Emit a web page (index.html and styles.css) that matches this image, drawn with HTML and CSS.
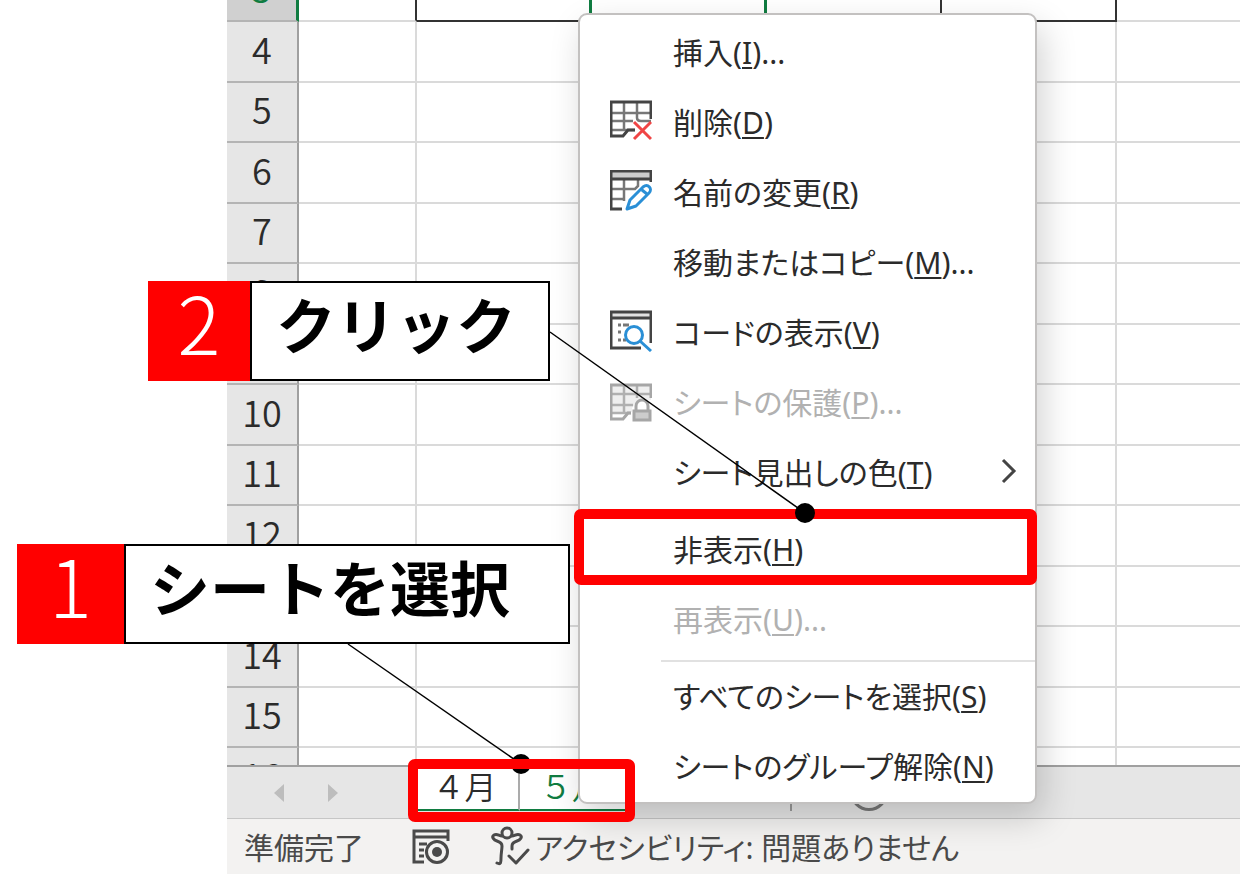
FILE: index.html
```
<!DOCTYPE html>
<html lang="ja">
<head>
    <meta charset="UTF-8">
    <meta name="viewport" content="width=device-width, initial-scale=1.0">
    <title>シートの非表示</title>
    <link rel="stylesheet" href="styles.css">
</head>
<body>
    <div class="excel">
        <!-- ワークシート -->
        <div class="sheet">
            <table class="grid">
                <colgroup>
                    <col class="col-head">
                    <col class="col-a">
                    <col class="col-b">
                    <col class="col-b">
                    <col class="col-b">
                    <col class="col-b">
                    <col>
                </colgroup>
                <tbody>
                    <tr class="selected"><th scope="row">3</th><td class="before"></td><td class="boxed green"></td><td class="boxed green"></td><td class="boxed"></td><td class="boxed"></td><td></td></tr>
                    <tr><th scope="row">4</th><td></td><td></td><td></td><td></td><td></td><td></td></tr>
                    <tr><th scope="row">5</th><td></td><td></td><td></td><td></td><td></td><td></td></tr>
                    <tr><th scope="row">6</th><td></td><td></td><td></td><td></td><td></td><td></td></tr>
                    <tr><th scope="row">7</th><td></td><td></td><td></td><td></td><td></td><td></td></tr>
                    <tr><th scope="row">8</th><td></td><td></td><td></td><td></td><td></td><td></td></tr>
                    <tr><th scope="row">9</th><td></td><td></td><td></td><td></td><td></td><td></td></tr>
                    <tr><th scope="row">10</th><td></td><td></td><td></td><td></td><td></td><td></td></tr>
                    <tr><th scope="row">11</th><td></td><td></td><td></td><td></td><td></td><td></td></tr>
                    <tr><th scope="row">12</th><td></td><td></td><td></td><td></td><td></td><td></td></tr>
                    <tr><th scope="row">13</th><td></td><td></td><td></td><td></td><td></td><td></td></tr>
                    <tr><th scope="row">14</th><td></td><td></td><td></td><td></td><td></td><td></td></tr>
                    <tr><th scope="row">15</th><td></td><td></td><td></td><td></td><td></td><td></td></tr>
                    <tr><th scope="row">16</th><td></td><td></td><td></td><td></td><td></td><td></td></tr>
                </tbody>
            </table>
        </div>

        <!-- シート見出し -->
        <div class="tab-bar">
            <div class="tab-nav">
                <button class="arrow" aria-label="前のシート"><svg width="12" height="20" viewBox="0 0 12 20"><path d="M11 1v18L1 10z"/></svg></button>
                <button class="arrow" aria-label="次のシート"><svg width="12" height="20" viewBox="0 0 12 20"><path d="M1 1v18l10-9z"/></svg></button>
            </div>
            <button class="tab">４月</button>
            <button class="tab">５月</button>
            <div class="tab-rest"></div>
            <button class="add-sheet" aria-label="新しいシート"></button>
        </div>

        <!-- ステータスバー -->
        <div class="status-bar">
            <span class="ready">準備完了</span>
            <svg class="macro-icon" width="38" height="38" viewBox="0 0 38 38" fill="none" stroke="#4a4a4a" stroke-width="3">
                <path d="M36 14V4H2v31h10M2 10h34M7 17h8M7 23h5M7 29h5"/>
                <circle cx="25" cy="25" r="10.5"/>
                <circle cx="25" cy="25" r="5" fill="#4a4a4a" stroke="none"/>
            </svg>
            <svg class="access-icon" width="40" height="40" viewBox="0 0 40 40" fill="none" stroke="#4a4a4a" stroke-width="3" stroke-linejoin="round" stroke-linecap="round">
                <circle cx="16" cy="7" r="5"/>
                <path d="M11 10C8 10 6 7 3 9s0 5 3 6 5 2 5 5-1 8-1 12 0 7-4 5M21 10c3 0 5-3 8-1s0 5-3 6-5 2-5 5v3M18 30l7 7 12-13"/>
            </svg>
            <span>アクセシビリティ: 問題ありません</span>
        </div>
    </div>

    <!-- 右クリックメニュー -->
    <ul class="context-menu">
        <li><button><span class="icon"></span><span>挿入(<u>I</u>)...</span></button></li>
        <li><button>
            <svg class="icon" viewBox="0 0 42 42" fill="none" stroke="#444" stroke-width="3">
                <path stroke="#777" stroke-width="2.5" d="M1 13h40M1 21h22M1 30h24M14 2v28M27 2v16q0 3 4 3h10"/>
                <path d="M41 19V2H1v34h12l5-6h7"/>
                <path stroke="#f04545" d="M24 22l17 17M41 22L24 39"/>
            </svg>
            <span>削除(<u>D</u>)</span></button></li>
        <li><button>
            <svg class="icon" viewBox="0 0 42 42" fill="none" stroke="#444" stroke-width="3">
                <path fill="#ccc" stroke="none" d="M1 1h40v8H1z"/>
                <path stroke="#777" stroke-width="2.5" d="M1 19h24l3-3V9M14 9v22M1 29h14"/>
                <path d="M41 12V1H1v38h11M1 9h40"/>
                <path stroke="#2a8fd6" stroke-linejoin="round" fill="#fff" d="M17 39l3-9 13-13c5-4 10 2 6 6L26 36zM32 20l5 4"/>
            </svg>
            <span>名前の変更(<u>R</u>)</span></button></li>
        <li><button><span class="icon"></span><span>移動またはコピー(<u>M</u>)...</span></button></li>
        <li><button>
            <svg class="icon" viewBox="0 0 42 42" fill="none" stroke="#444" stroke-width="3">
                <path fill="#e2e2e2" stroke="none" d="M1 2h40v6H1z"/>
                <path d="M41 33V2H1v36h30M1 8h40"/>
                <path stroke="#777" d="M8 15h3M13 15h6M8 22h3M8 30h3M13 30h3"/>
                <circle cx="24" cy="25" r="8.5" stroke="#2a8fd6" fill="#fff"/>
                <path stroke="#2a8fd6" d="M30 31l11 10"/>
            </svg>
            <span>コードの表示(<u>V</u>)</span></button></li>
        <li><button disabled>
            <svg class="icon" viewBox="0 0 42 42" fill="none" stroke="#a6a6a6" stroke-width="3">
                <path fill="#efefef" stroke="none" d="M1 5h40v15H28l-6 8v4H1z"/>
                <path stroke="#b0b0b0" stroke-width="2.5" d="M1 14h40M1 25h22M1 33h20M14 5v28M27 5v13"/>
                <path d="M41 18V5H1v34h12l5-6h3"/>
                <path d="M26 31v-5a6 6 0 0 1 12 0v5" fill="#fff"/>
                <path fill="#ccc" d="M24 31h16v9H24z"/>
            </svg>
            <span>シートの保護(<u>P</u>)...</span></button></li>
        <li><button><span class="icon"></span><span>シート見出しの色(<u>T</u>)</span>
            <svg class="chevron" width="16" height="26" viewBox="0 0 16 26" fill="none" stroke="#444" stroke-width="3"><path d="M2 2l11 11L2 24"/></svg></button></li>
        <li class="separator"></li>
        <li><button><span class="icon"></span><span>非表示(<u>H</u>)</span></button></li>
        <li><button disabled><span class="icon"></span><span>再表示(<u>U</u>)...</span></button></li>
        <li class="separator"></li>
        <li><button><span class="icon"></span><span>すべてのシートを選択(<u>S</u>)</span></button></li>
        <li><button><span class="icon"></span><span>シートのグループ解除(<u>N</u>)</span></button></li>
    </ul>

    <!-- 手順の説明 -->
    <svg class="leader" width="1240" height="874" viewBox="0 0 1240 874">
        <path d="M348 644L521 764" stroke="#000" stroke-width="1.5"/>
        <circle cx="521" cy="764" r="10"/>
    </svg>
    <div class="mark mark-tabs"></div>
    <div class="mark mark-hide"></div>
    <svg class="leader" width="1240" height="874" viewBox="0 0 1240 874">
        <path d="M550 332L805 513" stroke="#000" stroke-width="1.5"/>
        <circle cx="805" cy="513" r="10"/>
    </svg>

    <div class="callout callout-click">
        <span class="number">2</span>
        <span class="label">クリック</span>
    </div>
    <div class="callout callout-select">
        <span class="number">1</span>
        <span class="label">シートを選択</span>
    </div>
</body>
</html>
```

FILE: styles.css
```
* {
    margin: 0;
    padding: 0;
    box-sizing: border-box;
}

body {
    position: relative;
    min-height: 100vh;
    background: #fff;
    color: #2b2b2b;
    font-family: "Noto Sans", "Noto Sans CJK JP", sans-serif;
    font-size: 30px;
    overflow: hidden;
}

button {
    border: none;
    background: none;
    color: inherit;
    font: inherit;
    cursor: pointer;
}

.excel {
    display: flex;
    flex-direction: column;
    height: 100vh;
    margin-left: 227px;
}

/* ワークシート */
.sheet {
    flex: 1;
    min-height: 0;
    overflow: hidden;
    border-bottom: 2px solid #a0a0a0;
}

.grid {
    width: 100%;
    margin-top: -39px;
    table-layout: fixed;
    border-collapse: separate;
    border-spacing: 0;
}

.col-head {
    width: 72px;
}

.col-a {
    width: 118px;
}

.col-b {
    width: 175px;
}

.grid tr {
    height: 60px;
}

.grid tr:nth-child(even),
.grid .selected {
    height: 61px;
}

.grid th {
    padding-bottom: 8px;
    background: #e6e6e6;
    border-right: 2px solid #a0a0a0;
    border-bottom: 2px solid #b4b4b4;
    font-family: "Noto Sans CJK JP", sans-serif;
    font-size: 36px;
    font-weight: 350;
    line-height: 48px;
}

.grid td {
    border-right: 2px solid #dadada;
    border-bottom: 2px solid #dadada;
}

.grid td:last-child {
    border-right: none;
}

.grid .selected th {
    background: #d0d0d0;
    border-right: 3px solid #107c41;
    color: #107c41;
}

.grid .before {
    border-right-color: #333;
}

.grid .boxed {
    border-right-color: #333;
    border-bottom-color: #333;
}

.grid .green {
    border-right: 3px solid #107c41;
}

/* シート見出し */
.tab-bar {
    display: flex;
    height: 52px;
    background: #e6e6e6;
    border-bottom: 1px solid #c6c6c6;
}

.tab-nav {
    display: flex;
    align-items: center;
    gap: 42px;
    width: 190px;
    padding-left: 46px;
}

.arrow {
    display: flex;
    fill: #bdbdbd;
}

.tab {
    width: 103px;
    height: 44px;
    padding: 0 6px 6px 0;
    background: #fff;
    border-right: 2px solid #ababab;
    border-bottom: 2px solid #107c41;
    font-family: "Noto Sans CJK JP", sans-serif;
    font-size: 32px;
    font-weight: 350;
    line-height: 36px;
}

.tab + .tab {
    width: 112px;
    color: #107c41;
}

.tab-rest {
    width: 160px;
    height: 44px;
    border-right: 2px solid #999;
}

.add-sheet {
    width: 38px;
    height: 38px;
    margin: 6px 0 0 58px;
    border: 3px solid #777;
    border-radius: 50%;
}

/* ステータスバー */
.status-bar {
    display: flex;
    align-items: center;
    height: 55px;
    padding: 0 0 2px 17px;
    background: #f3f2f1;
    color: #4a4a4a;
    font-feature-settings: "palt";
    white-space: nowrap;
}

.ready {
    width: 120px;
}

.macro-icon {
    margin-left: 48px;
}

.access-icon {
    margin: 0 4px 0 41px;
}

/* 右クリックメニュー */
.context-menu {
    position: absolute;
    top: 13px;
    left: 578px;
    width: 459px;
    padding-top: 3px;
    background: #fff;
    border: 2px solid #c3c1c0;
    border-radius: 9px;
    box-shadow: 6px 14px 34px rgba(0, 0, 0, 0.18);
    font-feature-settings: "palt";
    list-style: none;
}

.context-menu button {
    display: flex;
    align-items: center;
    gap: 21px;
    width: 100%;
    height: 70px;
    padding: 0 18px 5px 30px;
    text-align: left;
    white-space: nowrap;
}

.context-menu button:hover {
    background: #f0f0f0;
}

.context-menu button:disabled {
    background: none;
    color: #b1b1b1;
}

.context-menu u {
    text-decoration-thickness: 2px;
    text-underline-offset: 3px;
}

.icon {
    flex: none;
    width: 42px;
    height: 42px;
}

.chevron {
    margin-left: auto;
}

.separator {
    height: 7px;
    margin-left: 81px;
    border-bottom: 2px solid #e1e1e1;
}

/* 手順の説明 */
.leader {
    position: absolute;
    top: 0;
    left: 0;
    pointer-events: none;
}

.mark {
    position: absolute;
    border: 10px solid #f00;
    border-radius: 7px;
    pointer-events: none;
}

.mark-tabs {
    top: 759px;
    left: 408px;
    width: 227px;
    height: 63px;
}

.mark-hide {
    top: 509px;
    left: 574px;
    width: 463px;
    height: 76px;
}

.callout {
    position: absolute;
    display: flex;
    height: 100px;
    color: #000;
    font-family: "Noto Sans CJK JP", sans-serif;
}

.number {
    width: 102px;
    background: #f00;
    color: #fff;
    font-size: 80px;
    font-weight: 300;
    line-height: 78px;
    text-align: center;
}

.label {
    border: 2px solid #000;
    background: #fff;
    font-size: 60px;
    font-weight: 700;
    line-height: 80px;
    white-space: nowrap;
}

.callout-click {
    top: 281px;
    left: 148px;
}

.callout-click .label {
    width: 300px;
    padding-left: 24px;
}

.callout-select {
    top: 544px;
    left: 17px;
}

.callout-select .number {
    width: 107px;
}

.callout-select .label {
    width: 446px;
    padding-left: 24px;
}
```
